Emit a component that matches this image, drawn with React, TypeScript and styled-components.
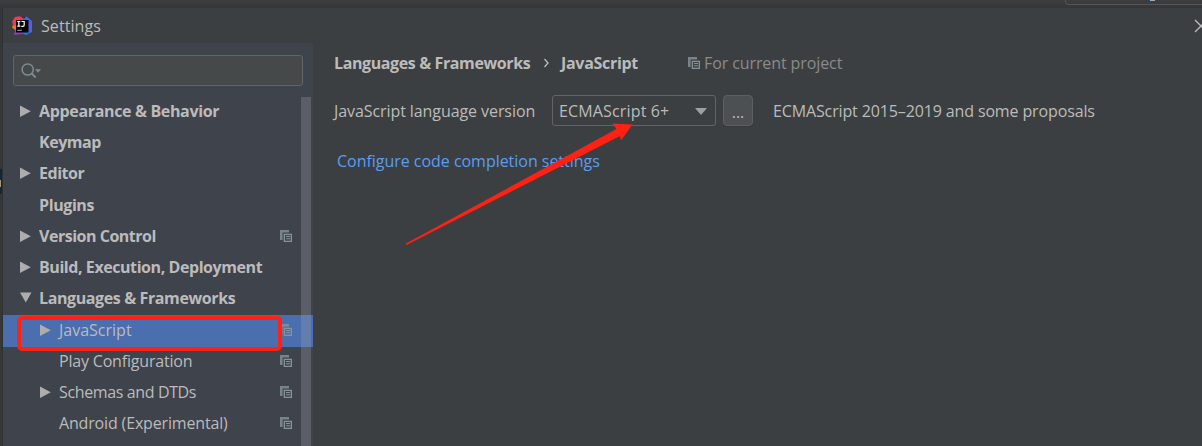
import React from "react";
import styled, { createGlobalStyle } from "styled-components";

const GlobalStyle = createGlobalStyle`
  * { box-sizing: border-box; }
  body {
    margin: 0;
    background: #3c3f41;
    color: #bbbbbb;
    font: 16px/22px "Open Sans", "Noto Sans", sans-serif;
    overflow: hidden;
  }
`;

const Screen = styled.div`
  position: relative;
  width: 1202px;
  height: 446px;
  display: flex;
  flex-direction: column;
  overflow: hidden;
`;

const Backdrop = styled.div`
  height: 8px;
  flex: none;
  display: flex;
  justify-content: flex-end;
  background: linear-gradient(#3c3e3f, #343637);
`;

const BackdropField = styled.div`
  width: 137px;
  height: 5px;
  border: solid #555758;
  border-width: 0 0 1px 1px;
  border-bottom-left-radius: 4px;
  display: flex;
  padding-left: 84px;
`;

const BackdropMark = styled.div`
  width: 5px;
  height: 1px;
  background: linear-gradient(90deg, #7fb4dc 60%, #c9a368 60%);
`;

const Main = styled.div`
  flex: 1;
  display: flex;
  min-height: 0;
`;

const Gutter = styled.div`
  width: 3px;
  flex: none;
  background: #353738;
  border-right: 1px solid #2f3132;
  padding-top: 161px;
`;

const GutterMark = styled.div`
  height: 25px;
  background: #10263a;
  padding-top: 11px;
`;

const GutterCaret = styled.div`
  width: 1px;
  height: 7px;
  background: #a8977c;
`;

const Dialog = styled.div`
  flex: 1;
  display: flex;
  flex-direction: column;
  min-width: 0;
`;

const TitleBar = styled.header`
  height: 35px;
  flex: none;
  display: flex;
  align-items: center;
  padding: 1px 0 0 9px;
  overflow: hidden;
`;

const Label = styled.span<{ $spacing?: number; $bold?: boolean; $color?: string }>`
  display: block;
  flex: none;
  white-space: nowrap;
  font-weight: ${(p) => (p.$bold ? 700 : 400)};
  color: ${(p) => p.$color ?? "#bbbbbb"};
  letter-spacing: ${(p) => p.$spacing ?? 0}px;
`;

const Title = styled(Label)`
  margin-left: 8px;
  flex: 1;
`;

const Body = styled.div`
  flex: 1;
  display: flex;
  min-height: 0;
`;

const Sidebar = styled.aside`
  width: 310px;
  flex: none;
  background: #3f434c;
  padding-top: 12px;
  display: flex;
  flex-direction: column;
`;

const SearchBox = styled.div`
  width: 290px;
  height: 31px;
  flex: none;
  margin-left: 10px;
  border: 1px solid #646464;
  border-radius: 3px;
  background: #45494a;
  display: flex;
  align-items: center;
  padding-left: 7px;
`;

const TreeArea = styled.div`
  position: relative;
  flex: 1;
  margin-top: 10px;
  overflow: hidden;
`;

const Row = styled.div<{ $level: number; $height: number; $selected?: boolean }>`
  height: ${(p) => p.$height}px;
  display: flex;
  align-items: center;
  padding: 0 21px 2px ${(p) => 16 + p.$level * 20}px;
  background: ${(p) => (p.$selected ? "#4b6eaf" : "transparent")};
`;

const Arrow = styled.div`
  width: 20px;
  height: 14px;
  flex: none;
  display: flex;
`;

const Push = styled.div`
  flex: 1;
`;

const ScrollThumb = styled.div`
  position: absolute;
  top: 1px;
  right: 2px;
  width: 10px;
  bottom: 0;
  background: rgba(166, 166, 176, 0.28);
`;

const Content = styled.main`
  flex: 1;
  min-width: 0;
  padding: 8px 0 0 21px;
`;

const Line = styled.div<{ $h: number; $top?: number }>`
  height: ${(p) => p.$h}px;
  margin-top: ${(p) => p.$top ?? 0}px;
  display: flex;
  align-items: center;
`;

const Cell = styled.div<{ $width: number }>`
  width: ${(p) => p.$width}px;
  flex: none;
  display: flex;
  align-items: center;
`;

const Select = styled.div`
  width: 164px;
  height: 31px;
  flex: none;
  border: 1px solid #646464;
  border-radius: 3px;
  display: flex;
  align-items: center;
  justify-content: space-between;
  padding: 1px 8px 0 6px;
`;

const MoreButton = styled.div`
  width: 30px;
  height: 31px;
  flex: none;
  margin: 0 20px 0 7px;
  border: 1px solid #5e6060;
  border-radius: 4px;
  background: #4c5052;
  display: flex;
  justify-content: center;
  align-items: center;
  padding-top: 3px;
  box-shadow: 0 1px 0 #363839;
`;

const Highlight = styled.div`
  position: absolute;
  left: 17px;
  top: 316px;
  width: 265px;
  height: 35px;
  border: 4px solid #ff2113;
  border-radius: 5px;
`;

const Pointer = styled.svg`
  position: absolute;
  left: 400px;
  top: 115px;
`;

const ProjectIcon = () => (
  <svg width="12" height="12" viewBox="0 0 12 12">
    <path d="M0 0h9v2.500H2.600V10H0z" fill="#87939a" opacity=".8" />
    <path d="M3.700 3.700H12V12H3.700zM5 5v5.700h5.700V5z" fill="#87939a" fillRule="evenodd" />
    <path d="M6 6h4v1H6zM6 8.200h4v1H6z" fill="#87939a" />
  </svg>
);

const CloseIcon = () => (
  <svg width="8" height="14" viewBox="0 0 8 14">
    <path d="M1 1l12 12M1 13l12-12" stroke="#bbb" strokeWidth="1.3" />
  </svg>
);

const SearchIcon = () => (
  <svg width="22" height="18" viewBox="0 0 22 18" fill="none">
    <circle cx="6.7" cy="7.5" r="5.6" stroke="#7f8b91" strokeWidth="1.5" />
    <path d="M10.7 11.5l4 4" stroke="#7f8b91" strokeWidth="1.9" />
    <path d="M14 7.2h6l-3 3.5z" fill="#7f8b91" />
  </svg>
);

const Logo = () => (
  <svg width="21" height="20" viewBox="0 0 21 20">
    <defs>
      <linearGradient id="pink" x1="0" y1="0" x2="0" y2="1">
        <stop offset="0" stopColor="#fe315d" />
        <stop offset=".45" stopColor="#f23a4e" />
        <stop offset=".6" stopColor="#f97a12" />
        <stop offset="1" stopColor="#8b39c9" />
      </linearGradient>
      <linearGradient id="blue" x1="0" y1="0" x2="0" y2="1">
        <stop offset="0" stopColor="#2e6fe8" />
        <stop offset=".5" stopColor="#6159e6" />
        <stop offset="1" stopColor="#2874e8" />
      </linearGradient>
    </defs>
    <path d="M3 1l5-.8 4 3v12L2 18.500l1.500-4L0 11.500l1-3-1-3z" fill="url(#pink)" />
    <path d="M12 3l2.500-2.500L20 5v11l-6 3-4-1.500z" fill="url(#blue)" />
    <path d="M2 19l2-5h9l-3 4z" fill="#8d3bc4" />
    <rect x="4" y="4" width="12.500" height="12.500" fill="#050505" />
    <path d="M5.300 5.500h3M6.800 5.500v4.500M5.300 10.200h3M9.500 5.500h2.700v3.500q0 1.300-1.300 1.300H9.300" stroke="#fff" strokeWidth="1.200" fill="none" />
    <path d="M5.300 14.300h4.500" stroke="#aaa" strokeWidth="1" />
  </svg>
);

const TreeArrow = ({ open }: { open?: boolean }) => (
  <svg width="14" height="14" viewBox="0 0 14 14">
    <path d={open ? "M1 1.500h11.500L6.800 11.500z" : "M1 1.500v11.600L11.800 7.300z"} fill="#adadad" />
  </svg>
);

type Item = {
  text: string;
  height?: number;
  level?: number;
  arrow?: "open" | "closed";
  icon?: boolean;
  selected?: boolean;
  spacing?: number;
};

const items: Item[] = [
  { text: "Appearance & Behavior", arrow: "closed", spacing: -0.34 },
  { text: "Keymap", spacing: -0.45 },
  { text: "Editor", arrow: "closed", height: 32, spacing: -0.45 },
  { text: "Plugins", spacing: -0.4 },
  { text: "Version Control", arrow: "closed", icon: true, spacing: -0.48 },
  { text: "Build, Execution, Deployment", arrow: "closed", spacing: -0.43 },
  { text: "Languages & Frameworks", arrow: "open", height: 32, spacing: -0.39 },
  { text: "JavaScript", level: 1, arrow: "closed", icon: true, selected: true, height: 32 },
  { text: "Play Configuration", level: 1, icon: true, height: 30, spacing: -0.19 },
  { text: "Schemas and DTDs", level: 1, arrow: "closed", icon: true, height: 32, spacing: -0.37 },
  { text: "Android (Experimental)", level: 1, icon: true, height: 30, spacing: -0.16 },
];

export default function App() {
  return (
    <Screen>
      <GlobalStyle />
      <Backdrop>
        <BackdropField>
          <BackdropMark />
        </BackdropField>
      </Backdrop>
      <Main>
        <Gutter>
          <GutterMark>
            <GutterCaret />
          </GutterMark>
        </Gutter>
        <Dialog>
          <TitleBar>
            <Logo />
            <Title $spacing={0.08}>Settings</Title>
            <CloseIcon />
          </TitleBar>
          <Body>
            <Sidebar>
              <SearchBox>
                <SearchIcon />
              </SearchBox>
              <TreeArea>
                {items.map((item) => (
                  <Row
                    key={item.text}
                    $level={item.level ?? 0}
                    $height={item.height ?? 31}
                    $selected={item.selected}
                  >
                    <Arrow>{item.arrow && <TreeArrow open={item.arrow === "open"} />}</Arrow>
                    <Label $bold={!item.level} $spacing={item.spacing}>
                      {item.text}
                    </Label>
                    <Push />
                    {item.icon && <ProjectIcon />}
                  </Row>
                ))}
                <ScrollThumb />
              </TreeArea>
            </Sidebar>
            <Content>
              <Line $h={24}>
                <Cell $width={209}>
                  <Label $bold $spacing={-0.39}>
                    Languages &amp; Frameworks
                  </Label>
                </Cell>
                <Cell $width={18}>
                  <svg width="7" height="10" viewBox="0 0 7 10" fill="none">
                    <path d="M1.500 1l3.500 4-3.500 4" stroke="#bbb" strokeWidth="1.300" />
                  </svg>
                </Cell>
                <Cell $width={127}>
                  <Label $bold $spacing={-0.3}>
                    JavaScript
                  </Label>
                </Cell>
                <Cell $width={16}>
                  <ProjectIcon />
                </Cell>
                <Label $color="#8a8a8a" $spacing={-0.1}>
                  For current project
                </Label>
              </Line>
              <Line $h={31} $top={20}>
                <Cell $width={218}>
                  <Label $spacing={-0.08}>JavaScript language version</Label>
                </Cell>
                <Select>
                  <Label $spacing={0.15}>ECMAScript 6+</Label>
                  <svg width="12" height="7" viewBox="0 0 12 7">
                    <path d="M0 0h12L6 7z" fill="#9da0a2" />
                  </svg>
                </Select>
                <MoreButton>...</MoreButton>
                <Label $spacing={-0.13}>ECMAScript 2015–2019 and some proposals</Label>
              </Line>
              <Line $h={24} $top={23}>
                <Cell $width={3} />
                <Label $color="#589df6" $spacing={-0.03}>
                  Configure code completion settings
                </Label>
              </Line>
            </Content>
          </Body>
        </Dialog>
      </Main>
      <Highlight />
      <Pointer width="240" height="135" viewBox="0 0 240 135">
        <path d="M5.500 128.700L216.500 14 212.500 8.500 232.500 9.500 221 25.500 220 21 6.500 130z" fill="#ff2113" />
      </Pointer>
    </Screen>
  );
}
